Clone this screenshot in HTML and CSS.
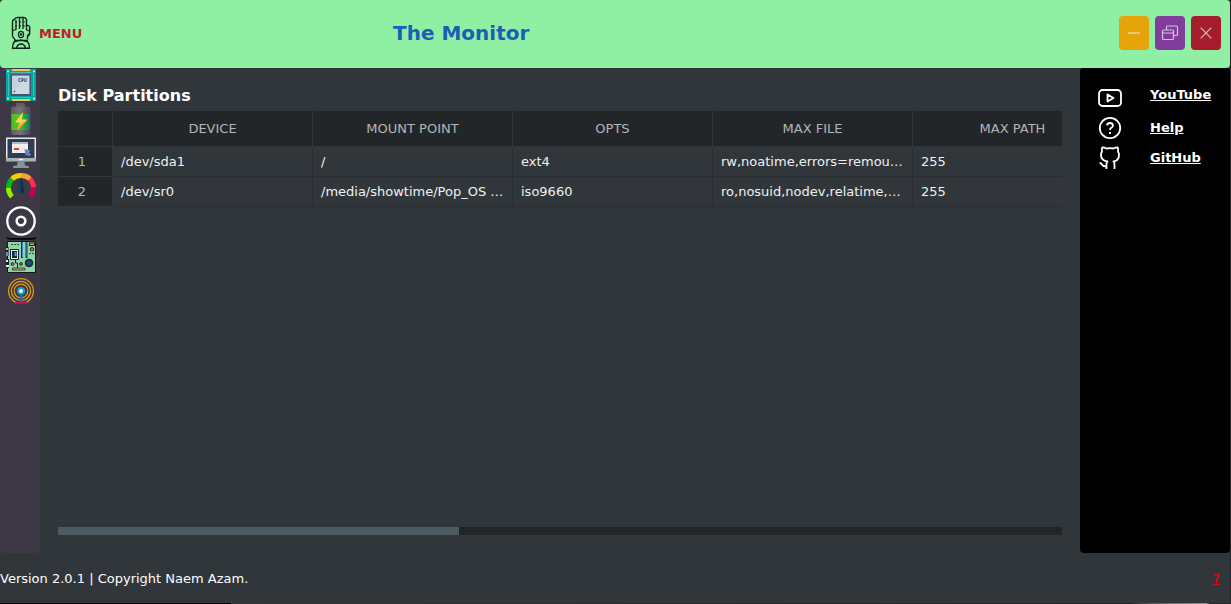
FILE: index.html
```html
<!DOCTYPE html>
<html lang="en">
<head>
<meta charset="utf-8">
<title>The Monitor</title>
<link rel="stylesheet" href="styles.css">
</head>
<body>
<div class="window">
  <header class="titlebar">
    <div class="menu">
      <svg class="menu-icon" width="20" height="34" viewBox="0 0 20 34" fill="none" stroke="#10231a" stroke-width="1.4">
        <path d="M1.500 20.500V6Q1.500 3.500 3.500 3.500Q4 1.500 6.500 1.500H12.500Q15 1.500 15.500 3.500V9.500Q18.700 9 18.700 11.500V17.500L16.500 20.500V23.500"/>
        <path d="M1.500 20.500L4 23.500V25M5 4V14M8.500 2V13M12 2V13M15.500 9V14" stroke-width="1.300"/>
        <path d="M4 6H6M8 6H10M12 6H14M4 10H6M8 10H10M12 10H14M2 14.500L5 13.500M15 13.500L18 15" stroke-width="1.100"/>
        <path d="M4 24.500Q1.500 28 1.500 32.300H18.500Q18.500 28 16 24.500ZM4 25.500L10 24L16 25.500M5.500 32Q6.500 28 10 28T14.500 32"/>
        <ellipse cx="10" cy="18.500" rx="2.600" ry="3.200" stroke-width="1.200"/><circle cx="10" cy="18.500" r=".6"/><path d="M16.500 20L18.500 18" stroke-width="2"/>
      </svg>
      <span>MENU</span>
    </div>
    <h1 class="title">The Monitor</h1>
    <div class="controls">
      <button class="control minimize" aria-label="Minimize"><svg width="30" height="34" viewBox="0 0 30 34"><path d="M9 17H21"/></svg></button>
      <button class="control restore" aria-label="Restore"><svg width="30" height="34" viewBox="0 0 30 34"><rect x="7.500" y="14" width="11" height="9.500" rx="1"/><path d="M7.500 17H18.500M11.500 14V11Q11.500 10 12.500 10H21.500Q22.500 10 22.500 11V18.500Q22.500 19.500 21.500 19.500H18.500"/></svg></button>
      <button class="control close" aria-label="Close"><svg width="30" height="34" viewBox="0 0 30 34"><path d="M9.700 11.700L20.300 22.300M20.300 11.700L9.700 22.300"/></svg></button>
    </div>
  </header>

  <div class="body">
    <nav class="sidebar">
      <svg width="40" height="34" viewBox="0 0 40 34">
        <path fill="#00a99a" d="M6 1H36V33H6z"/><path fill="#f3c45a" d="M12 1H30V3H12zM12 31H30V33H12z"/>
        <path d="M8.500 6V28M33.500 6V28M11 4.500H31M11 29.500H31" stroke="#4fc8bd" stroke-width=".8"/>
        <path fill="#455273" d="M10.500 6H31V28H10.500z"/><path fill="#c5d4dc" d="M12 7.500H29.500V26H12z"/><path fill="#d9e3e7" d="M12 26L29 8V26z" opacity=".4"/>
        <g fill="#d9fff9"><circle cx="8" cy="3.500" r="1"/><circle cx="34" cy="3.500" r="1"/><circle cx="8" cy="30.500" r="1"/><circle cx="34" cy="30.500" r="1"/></g>
        <text class="chip-label" x="18" y="13.500" textLength="9" lengthAdjust="spacingAndGlyphs">CPU</text><circle cx="14.500" cy="23.500" r=".8" fill="#35435d"/>
      </svg>
      <svg width="40" height="34" viewBox="0 0 40 34">
        <defs>
          <linearGradient id="charge"><stop stop-color="#52bd20"/><stop offset=".4" stop-color="#55c51b"/><stop offset="1" stop-color="#087e67"/></linearGradient>
          <linearGradient id="casing"><stop stop-color="#5d5862"/><stop offset=".45" stop-color="#78727b"/><stop offset="1" stop-color="#4d4655"/></linearGradient>
        </defs>
        <rect x="16" y="1" width="9" height="5" rx="1.500" fill="#655e68"/><rect x="11" y="4.500" width="19.500" height="28.500" rx="2" fill="url(#casing)"/>
        <path fill="url(#charge)" d="M11.500 12H30V28H11.500z"/><path fill="#ffd454" d="M23 10L15 20.500H19.500L17.500 28L27.500 17.500H22z"/><path fill="#f8a83b" d="M27.500 17.500L17.500 28L19.500 22z"/>
      </svg>
      <svg width="40" height="34" viewBox="0 0 40 34">
        <path fill="#e5e9e9" d="M6 1.500H36V23H6z"/><path fill="#303c55" d="M7.500 3H34.500V22H7.500z"/><path fill="#a7b4b6" d="M6 22H36V25.500H6z"/><path fill="#fff" d="M19 23h4v1.200h-4z"/>
        <path fill="#82979a" d="M17.500 25.500H24.500L25 30H17zM13 31Q13 29.500 16 29.500H26Q29 29.500 29 31V32H13z"/>
        <path fill="#eee" d="M12 6H28V17H12z"/><path fill="#aebac7" d="M12 6H28V8H12z"/><path fill="#df3d34" d="M14 12H19V14H14z"/><path fill="#7080bb" d="M24.500 13L30.500 14.500L29 16.500L31 18.500L29 20.500L27 18.500L25.500 20z"/>
      </svg>
      <svg width="40" height="34" viewBox="0 0 40 34" fill="none" stroke-width="5">
        <path stroke="#95ee00" d="M12 26.700A12.500 12.500 0 0 1 8.500 17.500"/><path stroke="#00b913" d="M8.500 17.500A12.500 12.500 0 0 1 12 9"/><path stroke="#f2cf00" d="M12 9A12.500 12.500 0 0 1 21 5.500"/>
        <path stroke="#ff9e36" d="M21 5.500A12.500 12.500 0 0 1 30 9"/><path stroke="#ff3048" d="M30 9A12.500 12.500 0 0 1 33.500 17.500"/><path stroke="#c10055" d="M33.500 17.500A12.500 12.500 0 0 1 30 26.700"/>
        <path fill="#073044" d="M20.300 9Q21 8 21.700 9L24 19Q24 23.500 21 23.500T18 19z"/><path fill="#0c465d" d="M21 8.500L18 19Q18 23.500 21 23.500z"/>
      </svg>
      <svg width="40" height="33" viewBox="0 0 40 33" fill="none" stroke="#fff"><circle cx="21" cy="17" r="13.700" stroke-width="2.300"/><circle cx="21" cy="17" r="4.300" stroke-width="2.600"/></svg>
      <svg width="40" height="37" viewBox="0 0 40 37">
        <path d="M7 .8Q8 1.800 11 1.800H31Q35 1.800 36 .8" fill="none" stroke="#050505" stroke-width="1.800"/>
        <path fill="#8dd5a6" stroke="#10191d" d="M7.500 4.500H35.500V35.500H7.500z"/>
        <path fill="#111c24" d="M6 10h2.500v9H6zM6 22h3v9H6zM29 5.500h6V9h-6z"/><path fill="#d9ae62" d="M6 11h2v2H6zM30 6.500h4v1.500h-4z"/><path fill="#5b91cf" d="M6 15h2v4H6z"/><path fill="#eee" d="M6 23h2v2H6zM6 28h3v2H6z"/>
        <path fill="#eef4ed" stroke="#152129" d="M10.500 12.500H18.500V22.500H10.500z"/><path fill="#14283b" d="M12 14h5v7H12z"/><path fill="#6593d1" d="M14.500 15h2v4h-2z"/>
        <path d="M22 5V21M26.500 5V21" stroke="#1d343e" stroke-width="2"/><path d="M22.500 5V20M27 5V20" stroke="#4587c5"/>
        <path d="M11 7.500H19M29 16.500H34" stroke="#285346" stroke-dasharray="2 1" fill="none"/>
        <path d="M15.500 23V26H17.500V31" stroke="#19282b" fill="none"/><path d="M12.500 31H25V33H12.500z" fill="#d9ae62" stroke="#19282b" stroke-width=".8"/>
        <circle cx="29" cy="26" r="3.800" fill="#1b3a5c" stroke="#111a23"/><path d="M26.500 26H31.500M29 23.500V28.500" stroke="#386b99" stroke-width=".6"/>
        <g fill="#d0606a" stroke="#17201e" stroke-width=".9"><circle cx="32" cy="12.300" r="1.800"/><circle cx="12.500" cy="27" r="1.400"/><circle cx="21" cy="27" r="1.400"/></g>
      </svg>
      <svg width="40" height="34" viewBox="0 0 40 34" fill="none">
        <g stroke="#e99c0b" stroke-width="1.200"><circle cx="21" cy="17" r="12.400"/><circle cx="21" cy="17" r="9.600"/><circle cx="21" cy="17" r="6.800"/></g>
        <circle cx="21" cy="17" r="3" fill="#fff" stroke="#159fc4" stroke-width="2.200"/><path fill="#087da2" d="M20 20H22L22.500 29H19.500z"/><path fill="#c50d50" d="M15 29Q15 27.300 17 27.300H25Q27 27.300 27 29V30H15z"/>
      </svg>
    </nav>

    <main class="content">
      <h2 class="heading">Disk Partitions</h2>
      <div class="table-view">
        <div class="table">
          <div class="head"></div><div class="head">DEVICE</div><div class="head">MOUNT POINT</div><div class="head">OPTS</div><div class="head">MAX FILE</div><div class="head">MAX PATH</div>
          <div class="index">1</div><div class="cell">/dev/sda1</div><div class="cell">/</div><div class="cell">ext4</div><div class="cell">rw,noatime,errors=remou…</div><div class="cell">255</div>
          <div class="index">2</div><div class="cell">/dev/sr0</div><div class="cell">/media/showtime/Pop_OS …</div><div class="cell">iso9660</div><div class="cell">ro,nosuid,nodev,relatime,…</div><div class="cell">255</div>
        </div>
      </div>
      <div class="scrollbar"><div class="thumb"></div></div>
    </main>

    <aside class="links">
      <svg width="24" height="24" viewBox="0 0 24 24"><rect x="1" y="4" width="22" height="16" rx="3.500"/><path d="M9.500 8.500V15.500L15.500 12z"/></svg><a>YouTube</a>
      <svg width="24" height="24" viewBox="0 0 24 24"><circle cx="12" cy="12" r="10.200"/><path d="M9 9.400Q9.300 7 12 7T15 9.500Q15 11 13 12Q12 12.500 12 14"/><path d="M12 16V18"/></svg><a>Help</a>
      <svg width="24" height="24" viewBox="0 0 24 24"><path d="M8.500 23V18Q8.500 16.500 9.500 15.500Q3 14.500 3 9Q3 7 4 5.500Q3.500 3 4.300 1.300Q6.500 1.300 8.500 2.500Q12 1.700 15.500 2.500Q17.500 1.300 19.700 1.300Q20.500 3 20 5.500Q21 7 21 9Q21 14.500 15.500 15.500Q16.500 16.500 16.500 18V23M8.500 20Q5.500 21 4 18.500Q3 17 1.500 17"/></svg><a>GitHub</a>
    </aside>
  </div>

  <footer class="statusbar"><span>Version 2.0.1 | Copyright Naem Azam.</span><a class="help">?</a></footer>
</div>
</body>
</html>
```
FILE: styles.css
```css
* { box-sizing: border-box; }
body {
  margin: 0;
  width: 1231px;
  height: 604px;
  overflow: hidden;
  background: linear-gradient(90deg, #000 231px, #343436 231px, #222326 1130px, #55565a 1150px, #909096 1206px, #25272a 1210px);
  color: #fff;
  font: 13px/16px "DejaVu Sans", sans-serif;
}
svg { display: block; }
.window { width: 1230px; height: 603px; display: flex; flex-direction: column; background: #31363b; }
.titlebar {
  height: 68px;
  display: grid;
  grid-template-columns: 393px 1fr 111px;
  align-items: center;
  background: #8ff0a4;
  border-radius: 4px;
  padding-bottom: 2px;
}
.menu { display: flex; align-items: center; gap: 8px; padding-left: 11px; color: #c01c28; font-weight: bold; }
.menu span { padding-top: 2px; }
.title { margin: 0; color: #1a5fb4; font-size: 20px; line-height: 24px; }
.controls { display: flex; gap: 6px; }
.control { width: 30px; height: 34px; padding: 0; border: 0; border-radius: 4px; }
.control svg { fill: none; stroke: #eff0f1; stroke-opacity: .75; stroke-width: 1.2; }
.minimize { background: #e5a50a; }
.restore { background: #813d9c; }
.close { background: #a51d2d; }
.body { height: 485px; display: flex; }
.sidebar { width: 40px; background: #3d3846; border-radius: 4px; }
.chip-label { font: bold 5px "DejaVu Sans", sans-serif; fill: #35435d; }
.content { width: 1040px; padding: 18px 18px; display: flex; flex-direction: column; }
.heading { margin: 0; height: 25px; font-size: 16px; line-height: 19px; }
.table-view { overflow: hidden; height: 416px; }
.table {
  width: 1255px;
  display: grid;
  grid-template-columns: 55px repeat(5, 200px);
  grid-template-rows: 36px 30px 30px;
}
.head, .index { background: #232629; color: #b4b5b6; text-align: center; border-right: 1px solid #31363b; border-bottom: 1px solid #31363b; }
.head { line-height: 35px; }
.index { line-height: 29px; padding-right: 6px; }
.cell { line-height: 29px; padding-left: 8px; color: #eff0f1; border-right: 1px solid #2a2e32; border-bottom: 1px solid #2a2e32; white-space: nowrap; }
.scrollbar { height: 8px; background: #232629; }
.thumb { width: 401px; height: 8px; background: #4f5b62; }
.links {
  width: 150px;
  background: #000;
  border-radius: 4px;
  padding: 16px 0 0 18px;
  display: grid;
  grid-template-columns: 52px 1fr;
  grid-template-rows: 30px 30px 30px;
  align-content: start;
}
.links svg { margin-top: 2px; fill: none; stroke: #fff; stroke-width: 1.8; stroke-linejoin: round; }
.links a { font-weight: bold; text-decoration: underline; padding-top: 6px; }
.links a:first-of-type { padding-top: 3px; }
.statusbar { height: 50px; display: flex; justify-content: space-between; align-items: center; padding: 2px 10px 0 0; }
.help { color: #f00; text-decoration: underline; padding-bottom: 1px; }
```
